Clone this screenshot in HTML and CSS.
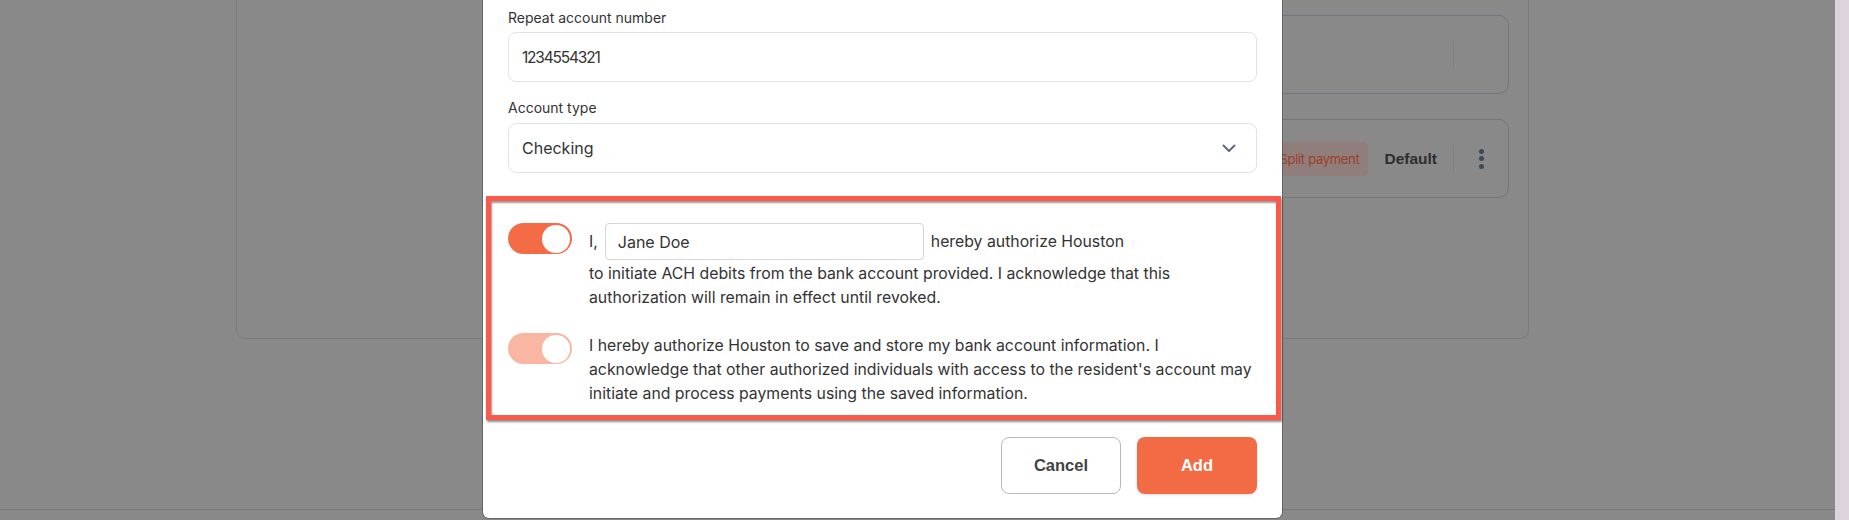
FILE: index.html
```html
<!DOCTYPE html>
<html lang="en">
<head>
<meta charset="utf-8">
<title>Add bank account</title>
<link rel="stylesheet" href="styles.css">
</head>
<body>
<div class="page">
  <div class="main">
    <div class="outer-card">
      <div class="method-card">
        <div class="method-actions">
          <span class="divider"></span>
          <span class="kebab-space"></span>
        </div>
      </div>
      <div class="method-card">
        <div class="method-actions">
          <span class="badge">Split payment</span>
          <span class="default">Default</span>
          <span class="divider"></span>
          <span class="kebab"><i></i><i></i><i></i></span>
        </div>
      </div>
    </div>
  </div>
  <div class="footer"></div>
  <div class="scroll-strip"></div>
</div>

<div class="modal">
  <div class="field">
    <label class="field-label">Repeat account number</label>
    <div class="input digits">1234554321</div>
  </div>
  <div class="field">
    <label class="field-label">Account type</label>
    <div class="input select">
      <span>Checking</span>
      <svg class="chevron" width="14" height="9" viewBox="0 0 14 9"><path d="M1.5 1.5 L7 7 L12.5 1.5" fill="none" stroke="#5d6b7b" stroke-width="2" stroke-linecap="round" stroke-linejoin="round"/></svg>
    </div>
  </div>

  <div class="consent">
    <div class="consent-row">
      <span class="toggle"><span class="knob"></span></span>
      <div class="consent-text">
        <div class="sign-line">
          <span>I,</span>
          <span class="name-input">Jane Doe</span>
          <span>hereby authorize Houston</span>
        </div>
        <p class="after-sign">to initiate ACH debits from the bank account provided. I acknowledge that this<br>authorization will remain in effect until revoked.</p>
      </div>
    </div>
    <div class="consent-row second">
      <span class="toggle light"><span class="knob"></span></span>
      <div class="consent-text">
        <p>I hereby authorize Houston to save and store my bank account information. I<br>acknowledge that other authorized individuals with access to the resident's account may<br>initiate and process payments using the saved information.</p>
      </div>
    </div>
  </div>

  <div class="actions">
    <button class="btn cancel">Cancel</button>
    <button class="btn add">Add</button>
  </div>
</div>
</body>
</html>
```

FILE: styles.css
```css
* { box-sizing: border-box; }
html, body { margin: 0; padding: 0; }
body {
  width: 1849px;
  height: 520px;
  overflow: hidden;
  background: #898989;
  font-family: Inter, "Noto Sans", sans-serif;
  color: #333;
}
.page {
  position: relative;
  height: 520px;
  display: flex;
  flex-direction: column;
}
.main {
  height: 509px;
  padding-left: 236px;
}
.outer-card {
  width: 1293px;
  height: 359px;
  margin-top: -20px;
  border: 1px solid #7b7b7b;
  border-radius: 9px;
  padding: 34px 19px 0 283px;
  display: flex;
  flex-direction: column;
  gap: 25px;
}
.method-card {
  height: 79px;
  border: 1px solid #6f767d;
  border-radius: 10px;
  display: flex;
  justify-content: flex-end;
  align-items: center;
}
.method-actions {
  display: flex;
  align-items: center;
}
.badge {
  background: #8f7e7b;
  color: #9e3d26;
  font-size: 13px;
  letter-spacing: -0.3px;
  height: 34px;
  line-height: 34px;
  padding: 0 9px 0 10px;
  border-radius: 5px;
  margin-right: 16px;
}
.default {
  font-family: "Liberation Sans", Arial, sans-serif;
  font-weight: 700;
  font-size: 15.5px;
  color: #2e2e2e;
  margin-right: 16px;
}
.divider {
  width: 1px;
  height: 27px;
  background: #7f7f7f;
}
.kebab, .kebab-space {
  width: 54px;
  display: flex;
  flex-direction: column;
  align-items: center;
  gap: 2.5px;
}
.kebab i {
  width: 5px;
  height: 5px;
  border-radius: 50%;
  background: #3a4a5a;
}
.footer {
  height: 11px;
  border-top: 1px solid #767676;
}
.scroll-strip {
  position: absolute;
  right: 0;
  top: 0;
  width: 14px;
  height: 520px;
  background: #ddd3dc;
}

/* Modal */
.modal {
  position: absolute;
  left: 483px;
  top: 0;
  width: 799px;
  height: 518px;
  background: #fff;
  border-radius: 0 0 6px 6px;
  box-shadow: 0 0 0 1px rgba(60,60,60,0.45);
  padding: 8px 25px 0 25px;
  display: flex;
  flex-direction: column;
}
.field { display: flex; flex-direction: column; }
.field + .field { margin-top: 16px; }
.field-label {
  font-size: 14px;
  line-height: 20px;
  color: #333;
  margin-bottom: 4px;
}
.field + .field .field-label { margin-bottom: 5px; }
.input {
  height: 50px;
  border: 1px solid #e1e3e6;
  border-radius: 8px;
  padding: 0 13px;
  display: flex;
  align-items: center;
  font-size: 16px;
  color: #333;
}
.digits { font-size: 15.5px; letter-spacing: -1.2px; }
.select { justify-content: space-between; padding-right: 20px; }

.consent {
  margin: 23px -24px 0 -22px;
  border: 5px solid #fd594a;
  box-shadow: 1px 2px 2px rgba(0,0,0,0.45), inset 1px 2px 2px rgba(0,0,0,0.4);
  padding: 22px 19px 9px 17px;
  display: flex;
  flex-direction: column;
  gap: 23px;
}
.consent-row {
  display: flex;
  align-items: flex-start;
  gap: 17px;
}
.toggle {
  flex: none;
  width: 64px;
  height: 31px;
  border-radius: 16px;
  background: #f36c45;
  position: relative;
}
.toggle.light { background: #f9b6a3; }
.knob {
  position: absolute;
  right: 2px;
  top: 1.5px;
  width: 28px;
  height: 28px;
  border-radius: 50%;
  background: #fff;
}
.consent-text {
  flex: 1;
  font-size: 15.8px;
  line-height: 24px;
  color: #333;
  white-space: nowrap;
}
.consent-text p { margin: 0; }
.consent-text p.after-sign { margin-top: 2px; }
.second .consent-text { padding-top: 1px; }
.sign-line {
  display: flex;
  align-items: center;
  gap: 7px;
  height: 37px;
}
.name-input {
  width: 319px;
  height: 37px;
  border: 1px solid #d3d6da;
  border-radius: 4px;
  padding: 0 12px;
  display: flex;
  align-items: center;
  font-size: 16px;
}

.actions {
  margin-top: 17px;
  display: flex;
  justify-content: flex-end;
  gap: 16px;
}
.btn {
  width: 120px;
  height: 57px;
  border-radius: 8px;
  font-family: "Liberation Sans", Arial, sans-serif;
  font-weight: 700;
  font-size: 16.5px;
}
.cancel {
  background: #fff;
  border: 1px solid #b9b9b9;
  color: #434343;
}
.add {
  background: #f36b44;
  border: none;
  color: #fff;
  box-shadow: 0 1px 3px rgba(0,0,0,0.12);
}
```
